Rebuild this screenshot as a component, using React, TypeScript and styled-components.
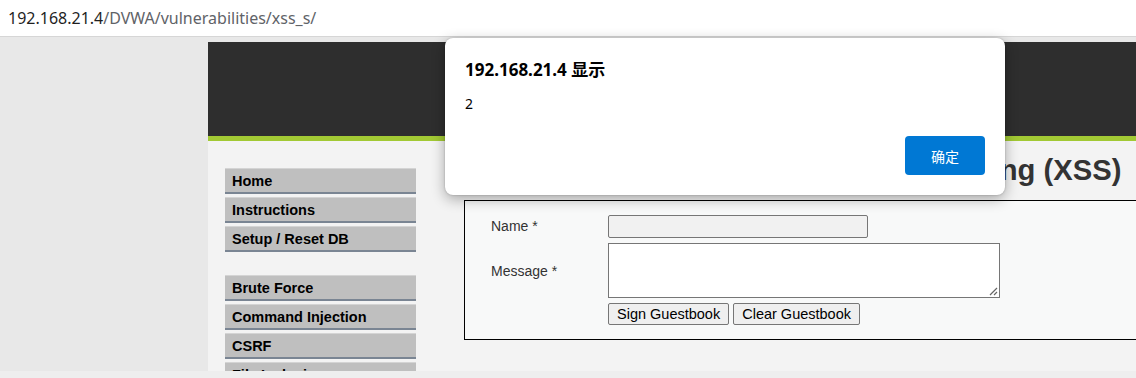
import React from 'react'
import styled, { createGlobalStyle } from 'styled-components'

const GlobalStyle = createGlobalStyle`
    html, body {
        margin: 0;
        padding: 0;
        overflow: hidden;
    }
    body {
        font-family: 'Liberation Sans', Arial, sans-serif;
    }
`

const Screen = styled.div`
    width: 1136px;
    height: 378px;
    display: flex;
    flex-direction: column;
    position: relative;
    overflow: hidden;
`

const AddressBar = styled.div`
    height: 36px;
    flex-shrink: 0;
    background: #ffffff;
    border-bottom: 1px solid #d6d6d6;
    display: flex;
    align-items: center;
    padding-left: 8px;
    font-family: 'Noto Sans', 'Open Sans', sans-serif;
    font-size: 16px;
`

const Host = styled.span`
    color: #1f1f1f;
`

const Path = styled.span`
    color: #5f6368;
`

const Viewport = styled.div`
    flex: 1;
    background: #e8e8e8;
    padding: 5px 0 0 208px;
    display: flex;
    flex-direction: column;
    overflow: hidden;
`

const Container = styled.div`
    flex: 1;
    background: #f3f3f3;
    display: flex;
    flex-direction: column;
    overflow: hidden;
`

const Header = styled.div`
    height: 94px;
    flex-shrink: 0;
    background: #2e2e2e;
    border-bottom: 5px solid #a2c934;
`

const Body = styled.div`
    display: flex;
    padding-left: 17px;
`

const Menu = styled.ul`
    list-style: none;
    margin: 0;
    padding: 27px 0 0 0;
    width: 191px;
    flex-shrink: 0;
`

const MenuItem = styled.li<{ $gap?: boolean }>`
    margin-top: ${p => (p.$gap ? '23px' : '0')};
    margin-bottom: 3px;
    height: 26px;
    box-sizing: border-box;
    background: #bfbfbf;
    border-top: 1px solid #d4d4d4;
    border-bottom: 2px solid #7a8593;
    padding-left: 7px;
    display: flex;
    align-items: center;
    font-weight: bold;
    font-size: 14.5px;
    color: #000;
`

const Main = styled.div`
    margin-left: 48px;
    flex: 1;
    min-width: 0;
`

const Title = styled.h1`
    margin: 14px 0 14px 0;
    line-height: 31px;
    font-size: 29.2px;
    font-weight: bold;
    color: #333333;
    white-space: nowrap;
`

const FormBox = styled.div`
    border: 1px solid #000;
    border-right: none;
    background: #f8f9f9;
    height: 140px;
    box-sizing: border-box;
    padding: 14px 0 0 26px;
    display: grid;
    grid-template-columns: 117px auto;
    grid-auto-rows: min-content;
    row-gap: 5px;
    align-content: start;
    justify-content: start;
    font-size: 14px;
    color: #333;
`

const Label = styled.div<{ $top: number }>`
    padding-top: ${p => p.$top}px;
`

const NameInput = styled.div`
    width: 260px;
    height: 23px;
    box-sizing: border-box;
    border: 1px solid #767676;
    border-radius: 2px;
    background: #f1f1f1;
`

const MessageArea = styled.div`
    width: 392px;
    height: 55px;
    box-sizing: border-box;
    border: 1px solid #767676;
    background: #ffffff;
    position: relative;
`

const Grip = styled.svg`
    position: absolute;
    right: 1px;
    bottom: 1px;
`

const ButtonRow = styled.div`
    display: flex;
    gap: 4px;
`

const FormButton = styled.div`
    height: 22px;
    box-sizing: border-box;
    border: 1px solid #767676;
    border-radius: 2px;
    background: #efefef;
    padding: 0 8px;
    display: flex;
    align-items: center;
    font-size: 14.5px;
    color: #000;
`

const BottomStrip = styled.div`
    height: 7px;
    flex-shrink: 0;
    background: #eeeeee;
    margin-left: -208px;
`

const Dialog = styled.div`
    position: absolute;
    left: 445px;
    top: 38px;
    width: 560px;
    height: 157px;
    box-sizing: border-box;
    background: #ffffff;
    border-radius: 8px;
    box-shadow: 0 4px 14px rgba(0, 0, 0, 0.32), 0 0 2px rgba(0, 0, 0, 0.25);
    padding: 22px 20px 20px 20px;
    display: flex;
    flex-direction: column;
    font-family: 'Noto Sans', 'Noto Sans CJK SC', sans-serif;
`

const DialogTitle = styled.div`
    font-size: 17px;
    font-weight: bold;
    color: #000;
    line-height: 20px;
    font-family: 'Noto Sans', 'Noto Sans CJK SC', sans-serif;
`

const DialogText = styled.div`
    margin-top: 15px;
    font-size: 14px;
    color: #000;
    line-height: 18px;
`

const DialogActions = styled.div`
    margin-top: auto;
    display: flex;
    justify-content: flex-end;
`

const OkButton = styled.div`
    width: 80px;
    height: 39px;
    border-radius: 4px;
    background: #0078d4;
    color: #fff;
    font-size: 14px;
    display: flex;
    align-items: center;
    justify-content: center;
    font-family: 'Noto Sans CJK SC', sans-serif;
`

const menuTop = ['Home', 'Instructions', 'Setup / Reset DB']
const menuVuln = ['Brute Force', 'Command Injection', 'CSRF', 'File Inclusion']

export default function App() {
  return (
    <Screen>
      <GlobalStyle />
      <AddressBar>
        <Host>192.168.21.4</Host>
        <Path>/DVWA/vulnerabilities/xss_s/</Path>
      </AddressBar>
      <Viewport>
        <Container>
          <Header />
          <Body>
            <Menu>
              {menuTop.map(m => (
                <MenuItem key={m}>{m}</MenuItem>
              ))}
              {menuVuln.map((m, i) => (
                <MenuItem key={m} $gap={i === 0}>{m}</MenuItem>
              ))}
            </Menu>
            <Main>
              <Title>Vulnerability: Stored Cross Site Scripting (XSS)</Title>
              <FormBox>
                <Label $top={3}>Name *</Label>
                <NameInput />
                <Label $top={20}>Message *</Label>
                <MessageArea>
                  <Grip width="10" height="10" viewBox="0 0 10 10">
                    <path d="M9 2 L2 9 M9 6 L6 9" stroke="#666" strokeWidth="1.2" />
                  </Grip>
                </MessageArea>
                <div />
                <ButtonRow>
                  <FormButton>Sign Guestbook</FormButton>
                  <FormButton>Clear Guestbook</FormButton>
                </ButtonRow>
              </FormBox>
            </Main>
          </Body>
        </Container>
        <BottomStrip />
      </Viewport>
      <Dialog>
        <DialogTitle>192.168.21.4 显示</DialogTitle>
        <DialogText>2</DialogText>
        <DialogActions>
          <OkButton>确定</OkButton>
        </DialogActions>
      </Dialog>
    </Screen>
  )
}
